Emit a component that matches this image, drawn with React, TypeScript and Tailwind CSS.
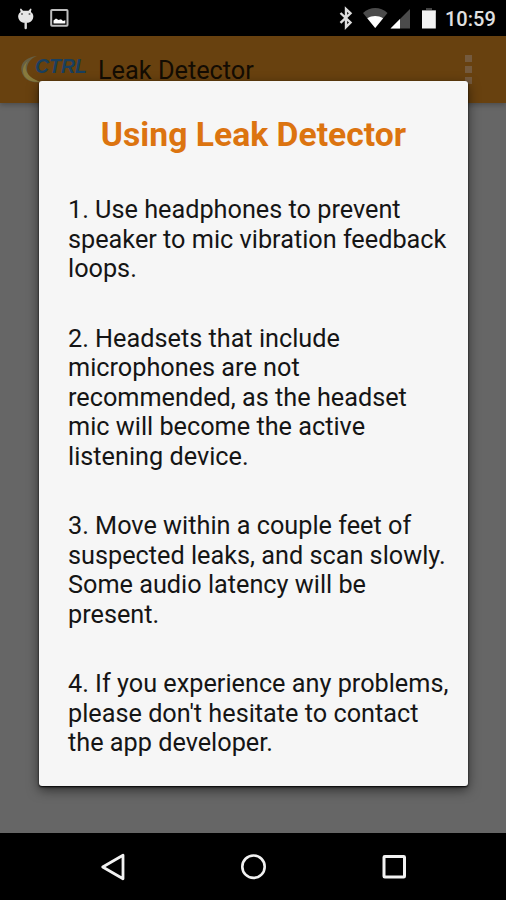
const steps: string[][] = [
  ["1. Use headphones to prevent", "speaker to mic vibration feedback", "loops."],
  [
    "2. Headsets that include",
    "microphones are not",
    "recommended, as the headset",
    "mic will become the active",
    "listening device.",
  ],
  [
    "3. Move within a couple feet of",
    "suspected leaks, and scan slowly.",
    "Some audio latency will be",
    "present.",
  ],
  ["4. If you experience any problems,", "please don't hesitate to contact", "the app developer."],
];

function StatusBar() {
  return (
    <header className="flex h-9 shrink-0 items-center justify-between bg-black">
      <svg className="h-9 w-[80px]" viewBox="0 0 80 36">
        <path d="M21 8.500l2 2.300h5.500l2-2.300 1 .6-.6 3c2.300 1.600 3 4.200 2 6.600-.9 2.200-2.700 3.600-4.800 4.100h-4.700c-2.100-.5-3.900-1.900-4.800-4.100-1-2.400-.3-5 2-6.600l-.6-3z" fill="#e6e6e6" />
        <path d="M25.700 22v6" stroke="#ddd" strokeWidth="2.400" strokeLinecap="round" />
        <circle cx="22" cy="14" r="1" fill="#666" />
        <circle cx="29.500" cy="14" r="1" fill="#666" />
        <rect x="51.200" y="10" width="16.300" height="15.800" rx="0.800" fill="none" stroke="#bdbdbd" strokeWidth="2" />
        <path d="M53.500 23.500v-3l2.500-2 2.500 1.500 2.500-.8 2 1.800 2.300-.7v3.200z" fill="#fff" />
      </svg>
      <div className="flex items-center">
        <svg className="h-9 w-[108px] overflow-visible" viewBox="0 0 108 36">
          <path d="M14.500 13l10 9.500-4.500 4.500V9l4.500 4.300-10 9.500" fill="none" stroke="#ddd" strokeWidth="2.400" />
          <path d="M37 13C44 6.300 54.500 6.300 61.500 13L49.200 28z" fill="#4b4b4b" />
          <path d="M41.300 18.300c4.800-3.200 11-3.200 15.800 0L49.200 28z" fill="#fff" />
          <path d="M84 9v19.500H64.500z" fill="#4b4b4b" />
          <path d="M74 19v9.500h-9.500z" fill="#fff" />
          <path d="M100 8h6v2h4v3H96v-3h4z" fill="#444" />
          <rect x="96" y="10.500" width="13.800" height="18" fill="#f3f3f3" />
        </svg>
        <span className="w-[72px] pt-[2px] pl-[11px] text-[20px] leading-[34px] font-medium text-[#e0e0e0]">10:59</span>
      </div>
    </header>
  );
}

function ActionBar() {
  return (
    <div className="flex h-[67px] shrink-0 items-start bg-[#68410f] shadow-[0_2px_5px_rgba(0,0,0,0.25)]">
      <svg className="ml-5 h-[67px] w-[70px]" viewBox="0 0 70 67">
        <path d="M17 20C4 21 -2 30 3 39c3 6 10 8 18 7C12 44 7 40 7 33c0-6 4-11 10-13z" fill="#665f43" />
        <path d="M8 25c-6 8 0 17 13 21C9 47 2 41 3 33c.6-3 2-6 5-8z" fill="#887a3c" />
        <text
          x="15"
          y="36.500"
          textLength="52"
          lengthAdjust="spacingAndGlyphs"
          className="fill-[#193f5e] font-['Liberation_Sans',sans-serif] text-[20.500px] font-bold italic"
        >
          CTRL
        </text>
      </svg>
      <h1 className="ml-[8px] pt-[18px] text-[25.300px] leading-[34px] whitespace-nowrap text-[#130c03]">Leak Detector</h1>
      <div className="mt-[19px] mr-[34px] ml-auto flex flex-col gap-[4px]">
        <i className="size-[7px] bg-[#745a3e]" />
        <i className="size-[7px] bg-[#745a3e]" />
        <i className="size-[7px] bg-[#745a3e]" />
      </div>
    </div>
  );
}

function NavigationBar() {
  return (
    <nav className="flex h-[67px] shrink-0 bg-black">
      <svg className="h-[67px] w-full" viewBox="0 0 506 67" fill="none" stroke="#f2f2f2">
        <path d="M123 22.300v23.500L102.700 34z" strokeWidth="2.800" strokeLinejoin="round" />
        <circle cx="253.500" cy="33.700" r="11.200" strokeWidth="2.600" />
        <rect x="384" y="23.500" width="20.500" height="20.500" rx="0.800" strokeWidth="3" />
      </svg>
    </nav>
  );
}

export default function App() {
  return (
    <div className="relative flex h-[900px] w-[506px] flex-col overflow-hidden bg-[#666] font-[Roboto,sans-serif]">
      <StatusBar />
      <ActionBar />
      <main className="flex-1" />
      <NavigationBar />
      <section
        role="dialog"
        className="absolute top-[81px] left-[39px] h-[705px] w-[429px] rounded-[3px] bg-[#f6f6f6] px-[29px] pt-[32px] shadow-[0_1px_2px_#000,0_4px_12px_rgba(0,0,0,0.55)]"
      >
        <h2 className="text-center text-[33.700px] leading-[44px] font-bold whitespace-nowrap text-[#dc7410]">
          Using Leak Detector
        </h2>
        <div className="flex flex-col gap-10 pt-[38px] text-[25.250px] leading-[29.500px] text-[#151515]">
          {steps.map((lines) => (
            <p key={lines[0]}>
              {lines.map((line) => (
                <span key={line} className="block whitespace-nowrap">
                  {line}
                </span>
              ))}
            </p>
          ))}
        </div>
      </section>
    </div>
  );
}
